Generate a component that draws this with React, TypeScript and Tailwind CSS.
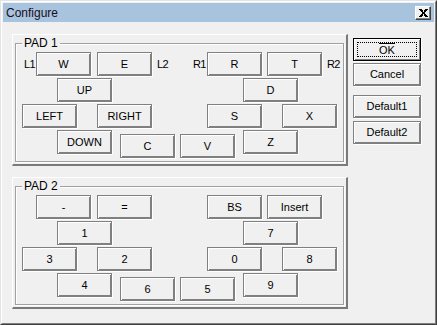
import React from 'react';

const font = { fontFamily: '"Liberation Sans", Arial, sans-serif' };

const Btn: React.FC<{ children?: React.ReactNode; className?: string }> = ({ children, className }) => (
  <div
    className={`flex h-[24px] w-[55px] shrink-0 items-center justify-center border border-[#808080] bg-[#f0f0f0] text-[11px] leading-none text-black shadow-[inset_1px_1px_0_#fff,inset_-1px_-1px_0_#808080,1px_1px_0_#fff] ${className ?? ''}`}
  >
    {children}
  </div>
);

const SideBtn: React.FC<{ children?: React.ReactNode; className?: string }> = ({ children, className }) => (
  <div
    className={`flex h-[23px] w-[68px] items-center justify-center border border-[#808080] bg-[#f0f0f0] text-[11px] leading-none text-black shadow-[inset_1px_1px_0_#fff,inset_-1px_-1px_0_#808080,1px_1px_0_#fff] ${className ?? ''}`}
  >
    {children}
  </div>
);

const Label: React.FC<{ children?: React.ReactNode; className?: string }> = ({ children, className }) => (
  <span className={`shrink-0 text-[11px] leading-none tracking-[-0.6px] text-black ${className ?? ''}`}>{children}</span>
);

type PadKeys = {
  title: string;
  labels: boolean;
  row1: [string, string, string, string];
  row2: [string, string];
  row3: [string, string, string, string];
  row4: [string, string, string, string];
};

const Pad: React.FC<{ pad: PadKeys }> = ({ pad }) => (
  // raised panel holding an etched group box
  <div className="h-[132px] w-[336px] border-t border-l border-r-2 border-b-2 border-t-white border-l-white border-r-[#7a7a7a] border-b-[#7a7a7a] pl-[2px] pt-[8px]">
    <div className="relative h-[119px] w-[329px] border border-[#a0a0a0] shadow-[inset_1px_1px_0_#fff,1px_1px_0_#fff]">
      <span className="absolute left-[6px] top-[-8px] bg-[#f0f0f0] px-[2px] text-[12px] leading-[14px] text-black">
        {pad.title}
      </span>
      <div className="flex flex-col gap-[2px] pt-[8px]">
        <div className="flex items-center">
          <Label className="ml-[8px] w-[12px]">{pad.labels ? 'L1' : ''}</Label>
          <Btn>{pad.row1[0]}</Btn>
          <Btn className="ml-[6px]">{pad.row1[1]}</Btn>
          <Label className="ml-[5px] w-[36px]">{pad.labels ? 'L2' : ''}</Label>
          <Label className="w-[14px]">{pad.labels ? 'R1' : ''}</Label>
          <Btn>{pad.row1[2]}</Btn>
          <Btn className="ml-[5px]">{pad.row1[3]}</Btn>
          <Label className="ml-[5px]">{pad.labels ? 'R2' : ''}</Label>
        </div>
        <div className="flex items-center">
          <Btn className="ml-[41px]">{pad.row2[0]}</Btn>
          <Btn className="ml-[131px]">{pad.row2[1]}</Btn>
        </div>
        <div className="flex items-center">
          <Btn className="ml-[6px]">{pad.row3[0]}</Btn>
          <Btn className="ml-[20px]">{pad.row3[1]}</Btn>
          <Btn className="ml-[55px]">{pad.row3[2]}</Btn>
          <Btn className="ml-[20px]">{pad.row3[3]}</Btn>
        </div>
        <div className="flex items-start">
          <Btn className="ml-[41px]">{pad.row4[0]}</Btn>
          <Btn className="ml-[8px] mt-[4px]">{pad.row4[1]}</Btn>
          <Btn className="ml-[5px] mt-[4px]">{pad.row4[2]}</Btn>
          <Btn className="ml-[8px]">{pad.row4[3]}</Btn>
        </div>
      </div>
    </div>
  </div>
);

const pad1: PadKeys = {
  title: 'PAD 1',
  labels: true,
  row1: ['W', 'E', 'R', 'T'],
  row2: ['UP', 'D'],
  row3: ['LEFT', 'RIGHT', 'S', 'X'],
  row4: ['DOWN', 'C', 'V', 'Z'],
};

const pad2: PadKeys = {
  title: 'PAD 2',
  labels: false,
  row1: ['-', '=', 'BS', 'Insert'],
  row2: ['1', '7'],
  row3: ['3', '2', '0', '8'],
  row4: ['4', '6', '5', '9'],
};

export default function App() {
  return (
    <div style={font} className="h-[325px] w-[437px] border border-t-[#e3e3e3] border-l-[#e3e3e3] border-r-[#404040] border-b-[#404040] bg-[#f0f0f0]">
      <div className="h-full w-full border border-t-white border-l-white border-r-[#808080] border-b-[#808080] p-[1px]">
        {/* title bar */}
        <div className="flex h-[19px] items-center justify-between bg-[#a8c3de] pl-[3px] pr-[3px]">
          <span className="text-[12px] leading-none text-[#1a0d1a]">Configure</span>
          <div className="flex h-[14px] w-[16px] items-center justify-center border border-t-white border-l-white border-r-[#404040] border-b-[#404040] bg-[#f0f0f0] shadow-[inset_-1px_-1px_0_#808080]">
            <svg width="9" height="8" viewBox="0 0 9 8" shapeRendering="crispEdges">
              <path d="M0 0h2.5l2 2.6L6.5 0H9L5.8 4 9 8H6.5l-2-2.6L2.5 8H0l3.2-4z" fill="#000" />
            </svg>
          </div>
        </div>

        <div className="flex">
          <div className="flex flex-col gap-[11px] pl-[9px] pt-[12px]">
            <Pad pad={pad1} />
            <Pad pad={pad2} />
          </div>
          <div className="ml-[5px] flex flex-col pt-[16px]">
            <SideBtn className="relative border-black">
              <span className="absolute inset-[3px] border border-dotted border-black" />
              <span className="border-t border-black pt-[1px] leading-none">OK</span>
            </SideBtn>
            <SideBtn className="mt-[2px]">Cancel</SideBtn>
            <SideBtn className="mt-[9px]">Default1</SideBtn>
            <SideBtn className="mt-[3px]">Default2</SideBtn>
          </div>
        </div>
      </div>
    </div>
  );
}
